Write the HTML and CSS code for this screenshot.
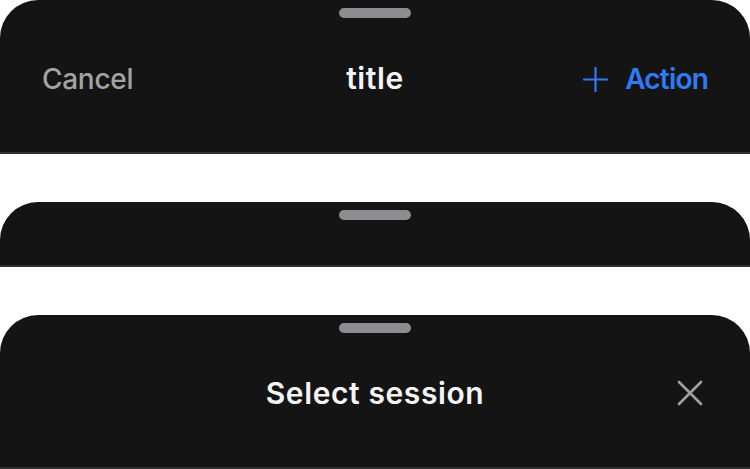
FILE: index.html
```html
<!DOCTYPE html>
<html lang="en">
<head>
    <meta charset="UTF-8">
    <meta name="viewport" content="width=device-width, initial-scale=1.0">
    <title>Sheet headers</title>
    <link rel="stylesheet" href="styles.css">
</head>
<body>
    <div class="stack">
        <div class="sheet">
            <div class="handle"></div>
            <div class="sheet-header">
                <button class="btn btn-cancel">Cancel</button>
                <h2 class="sheet-title">title</h2>
                <button class="btn btn-action">
                    <svg class="icon-plus" width="25" height="25" viewBox="0 0 25 25">
                        <path d="M12.5 1v23M1 12.5h23" stroke="currentColor" stroke-width="2.2" stroke-linecap="round" fill="none"/>
                    </svg>
                    <span>Action</span>
                </button>
            </div>
        </div>

        <div class="sheet sheet-compact">
            <div class="handle"></div>
        </div>

        <div class="sheet">
            <div class="handle"></div>
            <div class="sheet-header">
                <span></span>
                <h2 class="sheet-title">Select session</h2>
                <button class="btn btn-close" aria-label="Close">
                    <svg width="26" height="26" viewBox="0 0 26 26">
                        <path d="M2 2l22 22M24 2L2 24" stroke="currentColor" stroke-width="2.6" stroke-linecap="round" fill="none"/>
                    </svg>
                </button>
            </div>
        </div>
    </div>
</body>
</html>
```

FILE: styles.css
```css
* {
    margin: 0;
    padding: 0;
    box-sizing: border-box;
}

body {
    font-family: 'Inter', 'Liberation Sans', sans-serif;
    background: #ffffff;
}

.stack {
    display: flex;
    flex-direction: column;
    gap: 48px;
}

.sheet {
    background: #141414;
    border-radius: 38px 38px 0 0;
    border-bottom: 2px solid #303030;
    padding: 8px 42px 0;
}

.handle {
    width: 72px;
    height: 10px;
    border-radius: 5px;
    background: #8d8d91;
    margin: 0 auto;
}

.sheet-compact {
    height: 65px;
}

.sheet-header {
    display: grid;
    grid-template-columns: 1fr auto 1fr;
    align-items: center;
    height: 60px;
    margin: 30px 0 44px;
}

.sheet-title {
    color: #f4f4f4;
    font-size: 30px;
    font-weight: 600;
    letter-spacing: 0.6px;
    text-align: center;
}

.btn {
    background: none;
    border: none;
    font-family: inherit;
    font-size: 28px;
    cursor: pointer;
}

.btn-cancel {
    justify-self: start;
    color: #a3a3a3;
    font-weight: 500;
    letter-spacing: -0.3px;
    padding-top: 2px;
}

.btn-action {
    justify-self: end;
    display: flex;
    align-items: center;
    gap: 17px;
    color: #2f7bf6;
    font-weight: 600;
    letter-spacing: -0.8px;
    padding-top: 2px;
}

.btn-close {
    justify-self: end;
    display: flex;
    margin-right: 5px;
    color: #a0a0a0;
}
```
